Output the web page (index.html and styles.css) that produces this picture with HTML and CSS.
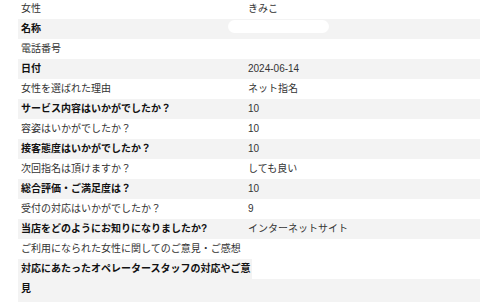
FILE: index.html
```html
<!DOCTYPE html>
<html lang="ja">
<head>
<meta charset="utf-8">
<link rel="stylesheet" href="styles.css">
</head>
<body>
<dl class="sheet">
  <div class="row"><dt class="label">女性</dt><dd class="value">きみこ</dd></div>
  <div class="row alt"><dt class="label">名称</dt><dd class="value"><span class="mask"></span></dd></div>
  <div class="row"><dt class="label">電話番号</dt><dd class="value"></dd></div>
  <div class="row alt"><dt class="label">日付</dt><dd class="value">2024-06-14</dd></div>
  <div class="row"><dt class="label">女性を選ばれた理由</dt><dd class="value">ネット指名</dd></div>
  <div class="row alt"><dt class="label">サービス内容はいかがでしたか？</dt><dd class="value">10</dd></div>
  <div class="row"><dt class="label">容姿はいかがでしたか？</dt><dd class="value">10</dd></div>
  <div class="row alt"><dt class="label">接客態度はいかがでしたか？</dt><dd class="value">10</dd></div>
  <div class="row"><dt class="label">次回指名は頂けますか？</dt><dd class="value">しても良い</dd></div>
  <div class="row alt"><dt class="label">総合評価・ご満足度は？</dt><dd class="value">10</dd></div>
  <div class="row"><dt class="label">受付の対応はいかがでしたか？</dt><dd class="value">9</dd></div>
  <div class="row alt"><dt class="label">当店をどのようにお知りになりましたか?</dt><dd class="value">インターネットサイト</dd></div>
  <div class="row"><dt class="label nowrap">ご利用になられた女性に関してのご意見・ご感想</dt><dd class="value"></dd></div>
  <div class="row alt tall"><dt class="label wide">対応にあたったオペレータースタッフの対応やご意見</dt><dd class="value split"></dd></div>
</dl>
</body>
</html>
```

FILE: styles.css
```css
* { box-sizing: border-box; }
html, body { margin: 0; padding: 0; background: #fff; }
body {
  font-family: "Liberation Sans", "Noto Sans CJK JP", sans-serif;
  font-size: 10px;
  color: #333;
  overflow: hidden;
}
.sheet {
  margin: -1px 0 0 18px;
  padding: 0;
}
.row {
  display: grid;
  grid-template-columns: 222px 1fr;
  height: 20px;
  line-height: 20px;
}
.row.alt { background: #f3f3f3; }
.label {
  margin: 0;
  padding-left: 3px;
  color: #333;
}
.row.alt .label { font-weight: bold; color: #111; }
.value {
  margin: 0;
  padding-left: 8px;
  color: #333;
  display: flex;
  align-items: flex-start;
}
.nowrap { white-space: nowrap; }
.mask {
  display: block;
  width: 101px;
  height: 13px;
  margin: 1px 0 0 -20px;
  background: #fff;
  border-radius: 7px;
}
.row.tall { height: auto; background: none; }
.row.tall .label.wide {
  background: #f3f3f3;
  margin-right: -12px;
  position: relative;
  z-index: 1;
  padding-bottom: 4px;
}
.value.split {
  background: linear-gradient(#fff 0 20px, #f3f3f3 20px);
}
```
